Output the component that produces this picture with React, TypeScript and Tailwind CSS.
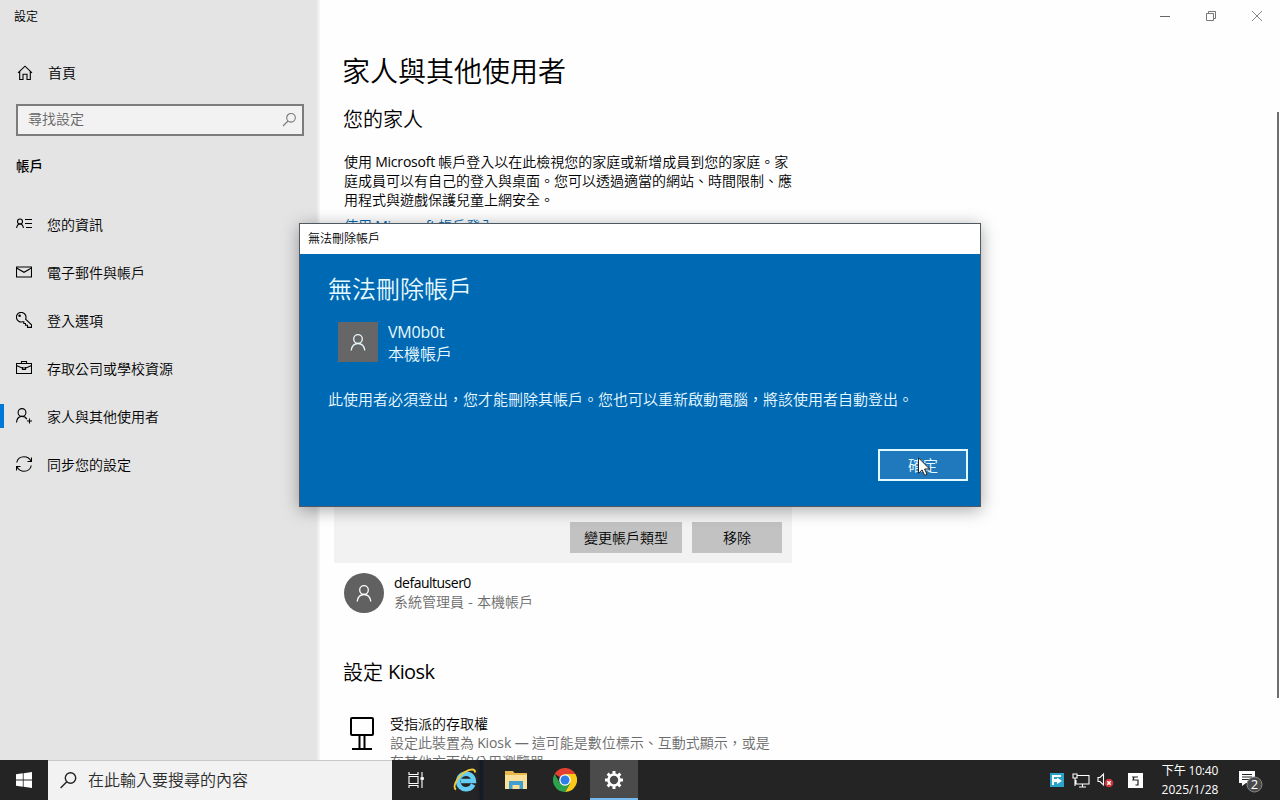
import type { ReactNode } from 'react';

type NavItemType = { label: string, icon: ReactNode, active?: boolean };

const navItems: NavItemType[] = [
    { label: '您的資訊', icon: <InfoIcon /> },
    { label: '電子郵件與帳戶', icon: <MailIcon /> },
    { label: '登入選項', icon: <KeyIcon /> },
    { label: '存取公司或學校資源', icon: <BriefcaseIcon /> },
    { label: '家人與其他使用者', icon: <FamilyIcon />, active: true },
    { label: '同步您的設定', icon: <SyncIcon /> },
];

export default function App() {
    return (
        <div lang="zh-TW" className="flex h-[800px] w-[1280px] flex-col overflow-hidden bg-white font-['Noto_Sans_CJK_TC',sans-serif] text-sm font-[350] text-black">
            <div className="relative flex h-[760px] overflow-hidden">
                <Sidebar />
                <MainContent />
                <DeleteDialog />
            </div>
            <Taskbar />
        </div>
    )
}

function Latin({ children, className = '' }: { children: ReactNode, className?: string }) {
    return <span className={`font-['Open_Sans','Noto_Sans_CJK_TC',sans-serif] font-normal ${className}`}>{children}</span>
}

function Sidebar() {
    return (
        <aside className="flex w-[320px] shrink-0 flex-col bg-linear-to-r from-[#e4e4e4] from-[316px] to-[#f8f8f8]">
            <div className="flex h-8 items-center pl-3.5 text-xs">設定</div>
            <div className="mt-4 flex h-12 items-center pl-4">
                <HomeIcon />
                <span className="ml-[15px]">首頁</span>
            </div>
            <div className="mx-4 mt-2 flex h-8 items-center justify-between border-2 border-[#7c7c7c] bg-[#f2f2f2] pr-[5px] pl-2.5 text-[#666]">
                <span className="-mt-1">尋找設定</span>
                <svg className="size-4" viewBox="0 0 16 16" fill="none" stroke="#777" strokeWidth="1.1">
                    <circle cx="10" cy="5.8" r="4.3" />
                    <path d="M7 9 2 14" />
                </svg>
            </div>
            <div className="mt-[14px] flex h-8 items-center pl-4 text-[13.5px] font-medium">帳戶</div>
            <nav className="mt-[18px]">
                {navItems.map(item => (
                    <div key={item.label} className="flex h-12 items-center">
                        <div className={item.active ? 'h-6 w-1 bg-[#0078d7]' : 'h-6 w-1'} />
                        <div className="ml-3">{item.icon}</div>
                        <span className="ml-[15px]">{item.label}</span>
                    </div>
                ))}
            </nav>
        </aside>
    )
}

function MainContent() {
    return (
        <main className="relative flex-1 bg-[#fefefe]">
            <div className="flex h-8 items-center justify-end gap-9 pr-[18px]">
                <svg className="size-2.5" viewBox="0 0 10 10" stroke="#666"><path d="M0 5.5h10" /></svg>
                <svg className="size-2.5" viewBox="0 0 10 10" fill="none" stroke="#777"><path d="M.5 2.5h7v7h-7zM2.5 2.5v-2h7v7h-2" /></svg>
                <svg className="size-2.5" viewBox="0 0 10 10" stroke="#888"><path d="m0 0 10 10M10 0 0 10" /></svg>
            </div>
            <div className="pl-[22px]">
                <h1 className="flex h-[76px] items-center text-[28px]">家人與其他使用者</h1>
                <h2 className="mt-[3px] ml-px flex h-4 items-center text-xl">您的家人</h2>
                <div className="mt-[24.5px] ml-0.5 text-sm leading-[18.6px] whitespace-nowrap">
                    <p>使用 <Latin className="tracking-[-0.2px]">Microsoft</Latin> 帳戶登入以在此檢視您的家庭或新增成員到您的家庭。家</p>
                    <p>庭成員可以有自己的登入與桌面。您可以透過適當的網站、時間限制、應</p>
                    <p>用程式與遊戲保護兒童上網安全。</p>
                    <p className="mt-2 text-[#0067b3]">使用 <Latin className="tracking-[-0.2px]">Microsoft</Latin> 帳戶登入</p>
                </div>
            </div>
            <div className="mt-[176.5px] ml-[14px] flex h-[151px] w-[458px] items-end justify-end gap-2.5 bg-[#f2f2f2] px-2.5 pb-2.5">
                <button className="h-[31px] w-28 bg-[#c2c2c2] pb-0.5">變更帳戶類型</button>
                <button className="h-[31px] w-[90px] bg-[#c2c2c2] pb-0.5">移除</button>
            </div>
            <div className="mt-2.5 flex h-10 items-center pl-6">
                <div className="flex size-10 items-center justify-center rounded-full bg-[#616161] text-white">
                    <PersonIcon />
                </div>
                <div className="-mt-0.5 ml-2.5 leading-[19px]">
                    <div><Latin className="tracking-[-0.5px]">defaultuser0</Latin></div>
                    <div className="text-[#6c6c6c]">系統管理員<span className="mx-px"> - </span>本機帳戶</div>
                </div>
            </div>
            <h2 className="mt-[43px] flex h-8 items-center gap-[5px] pl-[23px] text-xl">設定 <Latin className="tracking-[-0.6px]">Kiosk</Latin></h2>
            <div className="mt-[26px] flex pl-[30px]">
                <svg className="mt-[3px] h-[34px] w-6" viewBox="0 0 24 34" fill="none" stroke="black" strokeWidth="2">
                    <rect x="1" y="1" width="22" height="17" rx="1" />
                    <path d="M9.5 18v14M14.5 18v14M2 32h20" />
                </svg>
                <div className="ml-4 leading-[19px] whitespace-nowrap">
                    <div>受指派的存取權</div>
                    <div className="text-[#6c6c6c]">設定此裝置為 <Latin className="tracking-[-0.1px]">Kiosk —</Latin> 這可能是數位標示、互動式顯示，或是</div>
                    <div className="text-[#6c6c6c]">在其他方面的公用瀏覽器</div>
                </div>
            </div>
            <div className="absolute top-28 right-0 h-[586px] w-1 border-x border-white bg-[#6f6f6f]" />
        </main>
    )
}

function DeleteDialog() {
    return (
        <div className="absolute top-[223px] left-[299px] flex h-[284px] w-[682px] flex-col border border-[#4d5a63] bg-[#0069b4] text-[#e8faff] shadow-[0_3px_16px_rgba(0,0,0,0.35)]">
            <div className="flex h-[30px] items-center bg-white pb-0.5 pl-2 text-xs text-black">無法刪除帳戶</div>
            <div className="flex flex-1 flex-col pr-3 pl-7">
                <h2 className="mt-[18px] flex h-8 items-center text-2xl">無法刪除帳戶</h2>
                <div className="mt-[18px] flex h-10 items-center pl-2.5">
                    <div className="flex size-10 items-center justify-center bg-[#666]">
                        <PersonIcon />
                    </div>
                    <div className="ml-2.5 text-base leading-[21px]">
                        <div><Latin className="tracking-[-0.2px]">VM0b0t</Latin></div>
                        <div>本機帳戶</div>
                    </div>
                </div>
                <p className="mt-[25px] text-[15px] leading-6 whitespace-nowrap">此使用者必須登出，您才能刪除其帳戶。您也可以重新啟動電腦，將該使用者自動登出。</p>
                <div className="mt-[38px] flex justify-end">
                    <button className="relative h-8 w-[90px] border-2 border-[#e2faff] bg-[#2079bd] text-[15px]">
                        確定
                        <svg className="absolute top-[6px] left-[38px] h-[19px] w-3" viewBox="0 0 12 19" fill="white" stroke="#222" strokeWidth="1">
                            <path d="M.5.8v15.6l3.6-3.5 2.5 5.5 2.4-1.1-2.4-5.3h5z" />
                        </svg>
                    </button>
                </div>
            </div>
        </div>
    )
}

function Taskbar() {
    return (
        <footer className="flex h-10 bg-[#242424] text-white">
            <div className="flex w-12 items-center justify-center">
                <svg className="size-4" viewBox="0 0 16 16" fill="white">
                    <path d="M0 2.3 6.8 1.3v6.2H0zM7.6 1.2 16 0v7.5H7.6zM0 8.4h6.8v6.3L0 13.7zM7.6 8.4H16V16l-8.4-1.2z" />
                </svg>
            </div>
            <div className="flex w-[344px] items-center border-t border-[#c8c8c8] bg-[#f2f2f2] pb-px pl-3 text-base text-[#2c2c2c]">
                <svg className="size-[17px]" viewBox="0 0 17 17" fill="none" stroke="#222" strokeWidth="1.4">
                    <circle cx="10.5" cy="6" r="5.2" />
                    <path d="M6.8 9.8.6 16" />
                </svg>
                <span className="-mt-0.5 ml-[11px]">在此輸入要搜尋的內容</span>
            </div>
            <div className="flex w-12 items-center justify-center">
                <svg className="h-4 w-[17px]" viewBox="0 0 17 16" fill="none" stroke="white" strokeWidth="1.1">
                    <path d="M1 0v2.5h9V0M1 16v-2.5h9V16M1 4.5h9v7H1zM14 0v16" />
                    <path d="M12.5 5.2h3.4v2.6h-3.4z" fill="white" stroke="none" />
                </svg>
            </div>
            <div className="flex w-[50px] items-center justify-center bg-linear-to-r from-[#242424] from-[38px] via-[#111827] via-[41px] to-[#242424] to-[45px]"><ExplorerIcon /></div>
            <div className="flex w-[51px] items-center justify-center">
                <svg className="h-5 w-[22px]" viewBox="0 0 22 20">
                    <path d="M0 1h8l1.5 2H22v16H0z" fill="#e9b94c" />
                    <path d="M0 5h22v14H0z" fill="#fbe09a" />
                    <path d="M4 11h14v8h-3.5v-4h-7v4H4z" fill="#3fa0d0" />
                </svg>
            </div>
            <div className="flex w-[48px] items-center justify-center"><ChromeIcon /></div>
            <div className="ml-[1px] flex w-12 items-center justify-center border-b-2 border-[#76b9ed] bg-[#4b4b4b] pt-0.5">
                <GearIcon />
            </div>
            <div className="ml-auto flex items-center">
                <svg className="h-[14px] w-[14px]" viewBox="0 0 14 14">
                    <path d="M0 0h14v14H0z" fill="#2ba3c9" />
                    <path d="M2 2h9v2H4v2h3V4.5L12 8l-5 3V9H4v3H2z" fill="white" />
                </svg>
                <svg className="ml-2 h-[15px] w-[18px]" viewBox="0 0 18 15" fill="none" stroke="white" strokeWidth="1.1">
                    <path d="M5 2.5h12v8.5H4V7M10.5 11v3M7 14h7M1 1h4v4H1zM3 5v8" />
                </svg>
                <svg className="ml-[7px] h-4 w-[17px]" viewBox="0 0 17 16" fill="none" stroke="white" strokeWidth="1.1">
                    <path d="M1 5.5h2L6.5 2v11L3 9.5H1z" />
                    <circle cx="12" cy="11" r="4.3" fill="#d3343a" stroke="none" />
                    <path d="m10.3 9.3 3.4 3.4M13.7 9.3l-3.4 3.4" strokeWidth="1.4" />
                </svg>
                <div className="ml-3.5 flex size-[15px] items-center justify-center bg-white">
                    <svg className="size-[11px]" viewBox="0 0 11 11" fill="none" stroke="#222" strokeWidth="1.2"><path d="M2 2h6M4 2 3 5h5v5H5.500" /></svg>
                </div>
                <div className="ml-[17px] w-[60px] pb-px text-center text-xs leading-[18px] font-normal whitespace-nowrap">
                    <div>下午 <Latin className="tracking-[-0.2px]">10:40</Latin></div>
                    <div><Latin>2025/1/28</Latin></div>
                </div>
                <div className="relative ml-[18px] h-6 w-[42px]">
                    <svg className="h-[25px] w-[26px]" viewBox="0 0 26 25">
                        <path d="M1 3h16v12H8l-4 3v-3H1z" fill="white" />
                        <path d="M4 6.5h10M4 9h10M4 11.500h7" stroke="#242424" />
                        <circle cx="16.5" cy="16.500" r="7.500" fill="#4a4a4a" stroke="#888" />
                    </svg>
                    <span className="absolute top-[9px] left-[12.5px] w-2 text-center font-['Open_Sans',sans-serif] text-[13px] leading-[15px] font-normal">2</span>
                </div>
            </div>
        </footer>
    )
}

function PersonIcon() {
    return (
        <svg className="h-[17px] w-4" viewBox="0 0 16 17" fill="none" stroke="currentColor" strokeWidth="1.3">
            <circle cx="8" cy="5" r="4.3" />
            <path d="M1.2 16.5c.6-4.600 3-7 6.800-7s6.200 2.400 6.800 7" />
        </svg>
    )
}

function HomeIcon() {
    return (
        <svg className="mt-px ml-px size-4" viewBox="0 0 16 16" fill="none" stroke="black" strokeWidth="1.1">
            <path d="m1 7.800 7-6.600 7 6.600M2.700 6.500v8H6V9.300h4v5.200h3.300v-8" />
        </svg>
    )
}

function InfoIcon() {
    return (
        <svg className="size-4" viewBox="0 0 16 16" fill="none" stroke="black" strokeWidth="1.1">
            <circle cx="4" cy="5.500" r="2.500" />
            <path d="M.6 12C1 9.300 2 8 4 8s3 1.300 3.400 4M9 3.500h7M9 7.500h7M10 11.500h6" />
        </svg>
    )
}

function MailIcon() {
    return (
        <svg className="size-4" viewBox="0 0 16 16" fill="none" stroke="black" strokeWidth="1.1">
            <path d="M.5 3h15v10H.5zM.5 4 8 8.300 15.500 4" />
        </svg>
    )
}

function KeyIcon() {
    return (
        <svg className="size-4" viewBox="0 0 16 16" fill="none" stroke="black" strokeWidth="1.1">
            <path d="M9.600 7.100A4.800 4.800 0 1 0 6.800 9.700l1 .1v1.700h1.700v1.700h2v2.200h4v-2.600z" />
            <circle cx="3.600" cy="3.800" r=".7" fill="black" />
        </svg>
    )
}

function BriefcaseIcon() {
    return (
        <svg className="size-4" viewBox="0 0 16 16" fill="none" stroke="black" strokeWidth="1.1">
            <path d="M.5 3.500h15v10H.5zM5.500 3.500v-2h5v2M.5 5.500l5.500 2.500h4l5.500-2.500M6.500 7v2.500h3V7" />
        </svg>
    )
}

function FamilyIcon() {
    return (
        <svg className="size-4" viewBox="0 0 16 16" fill="none" stroke="black" strokeWidth="1.1">
            <circle cx="6" cy="4.500" r="3.900" />
            <path d="M.5 14.500C.8 10.500 2.800 8.400 6 8.400c2.300 0 3.900 1 4.800 2.800M13.500 10.500v5M11 13h5" />
        </svg>
    )
}

function SyncIcon() {
    return (
        <svg className="size-4" viewBox="0 0 16 16" fill="none" stroke="black" strokeWidth="1.1">
            <path d="M.7 6.500C1.500 3 4.500.8 8 .8c3 0 5.500 1.500 7 4.200M15.500 1.500v4h-4M15.300 9.500c-.8 3.500-3.800 5.700-7.300 5.700-3 0-5.500-1.500-7-4.200M.5 14.500v-4h4" />
        </svg>
    )
}

function ExplorerIcon() {
    return (
        <svg className="h-6 w-6" viewBox="0 0 24 24" fill="none">
            <path d="M20.200 16.500A7.800 7.800 0 1 1 20.800 13H8" stroke="#63cdf3" strokeWidth="4.600" />
            <path d="M3 21.500C-1 19.500 4 9 12 4 17 .8 22.500.5 22 4.500" stroke="#f3c73b" strokeWidth="2" />
        </svg>
    )
}

function ChromeIcon() {
    return (
        <svg className="size-6" viewBox="0 0 24 24">
            <path d="M12 12 1.600 6A12 12 0 0 1 22.400 6z" fill="#e4402f" />
            <path d="M12 12V6h10.400A12 12 0 0 1 12 24l5.200-9z" fill="#fbc916" />
            <path d="M12 12 6.800 15 1.600 6A12 12 0 0 0 12 24l5.200-9z" fill="#2ca24c" />
            <circle cx="12" cy="12" r="5.800" fill="white" />
            <circle cx="12" cy="12" r="4.500" fill="#2f7de9" />
        </svg>
    )
}

function GearIcon() {
    return (
        <svg className="size-5" viewBox="0 0 20 20" fill="none" stroke="white">
            <circle cx="10" cy="10" r="5.500" strokeWidth="2.600" />
            <path d="M10 1v3M10 16v3M1 10h3M16 10h3M3.640 3.640l2.120 2.120M14.240 14.240l2.120 2.120M3.640 16.360l2.120-2.120M14.240 5.760l2.120-2.120" strokeWidth="3" />
        </svg>
    )
}
